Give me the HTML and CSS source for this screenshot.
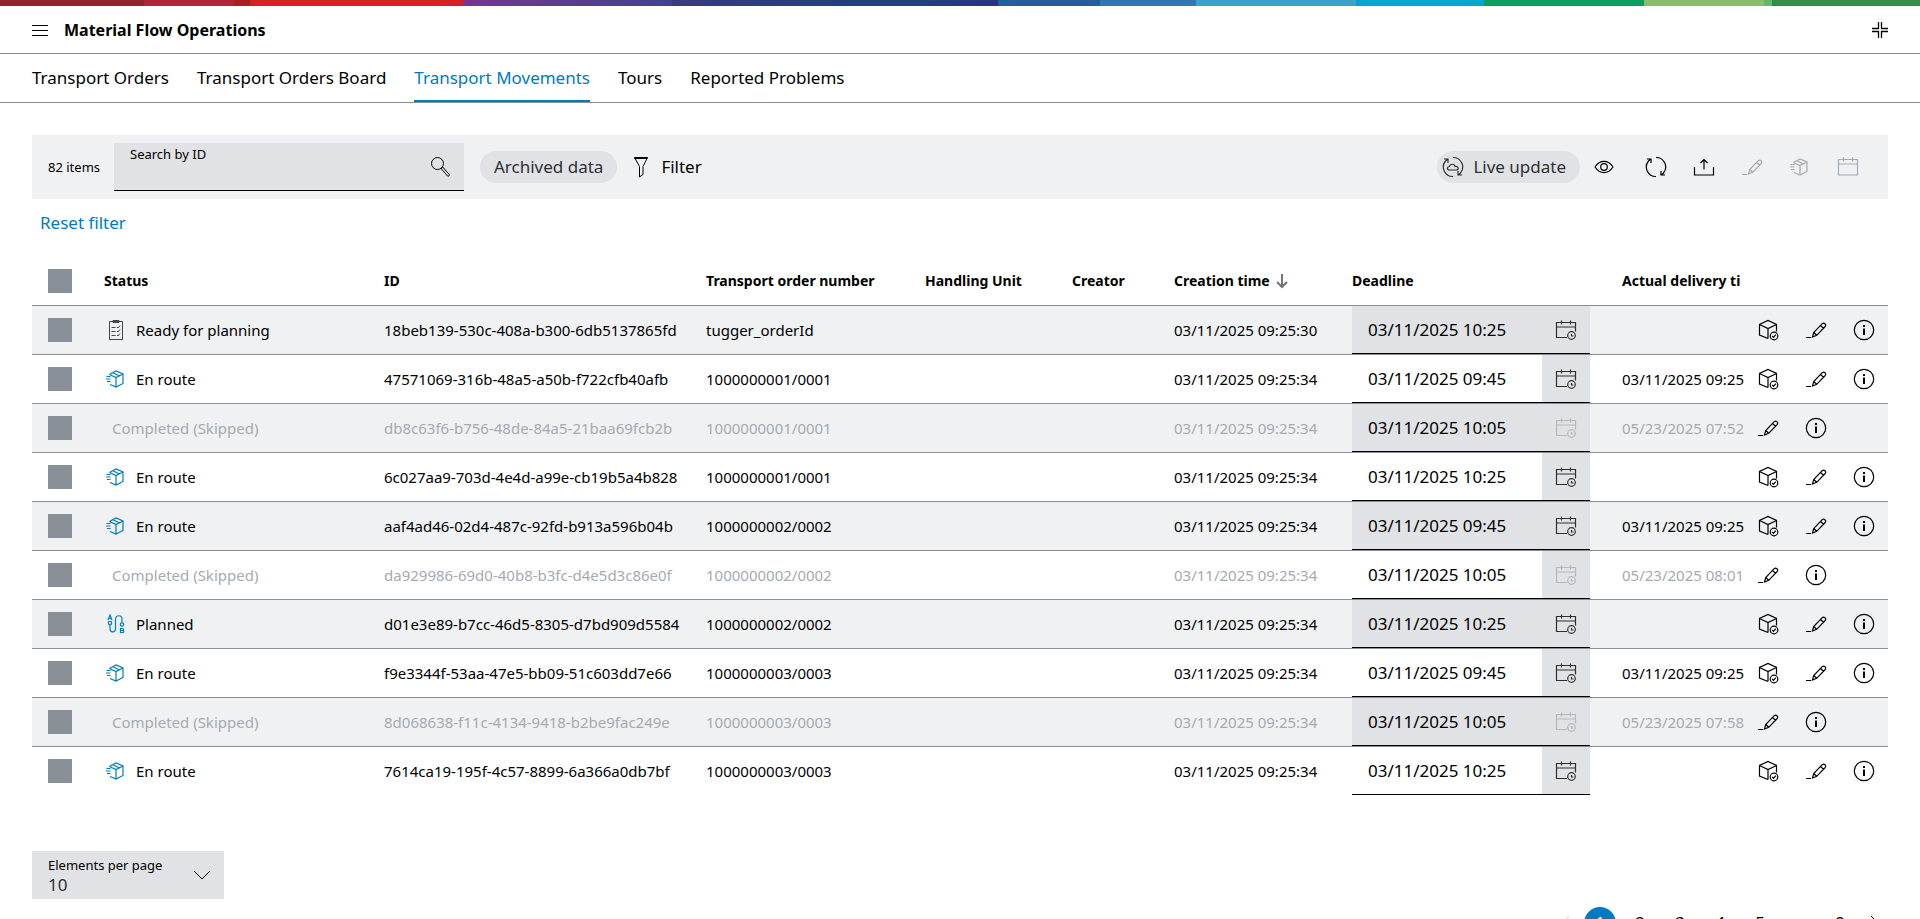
FILE: index.html
```html
<!DOCTYPE html>
<html lang="en">
<head>
<meta charset="utf-8">
<title>Material Flow Operations</title>
<meta name="viewport" content="width=device-width, initial-scale=1">
<link rel="stylesheet" href="styles.css">
</head>
<body>
<svg class="sprite" aria-hidden="true">
  <symbol id="i-search" viewBox="0 0 24 24"><circle cx="9.5" cy="8.5" r="6"/><path d="M13.2 13.6l1.6-1.5 6.3 7.3c.8 1-.7 2.4-1.6 1.5z"/></symbol>
  <symbol id="i-filter" viewBox="0 0 24 24"><path d="M5.500 2.500h13l-4.500 9v8l-3.500 2.500v-10.500zM5.500 3.500h13"/></symbol>
  <symbol id="i-live" viewBox="0 0 24 24"><path d="M12 2.500a9.500 9.500 0 0 1 7.500 15.500l-2 2M12 21.500a9.500 9.500 0 0 1-7.500-15.500l2-2M3 4h4v4M21 20h-4v-4M8.500 15c-3 0-2.500-3.500 0-3.500 .5-3 5-3 5.500 0 4-.5 4 3.500 1.500 3.500z"/></symbol>
  <symbol id="i-eye" viewBox="0 0 24 24"><path d="M3 12c5-7.500 13-7.500 18 0-5 7.500-13 7.500-18 0z"/><circle cx="12" cy="12" r="3.300"/></symbol>
  <symbol id="i-refresh" viewBox="0 0 24 24"><path d="M12 2.500a9.500 9.500 0 0 1 7.500 15.500l-2 2M12 21.500a9.500 9.500 0 0 1-7.500-15.500l2-2M3 4h4v4M21 20h-4v-4"/></symbol>
  <symbol id="i-export" viewBox="0 0 24 24"><path d="M2.500 12v8h19v-8M12 14.500v-10M8.500 8l3.500-3.500 3.500 3.500"/></symbol>
  <symbol id="i-edit" viewBox="0 0 24 24"><path d="M2 19.500h5M8.500 19l1.200-4.500 8.500-8.800c1.800-1.700 4.700.8 3 2.800l-8.500 8.800zM9.700 14.500l3 2.800M16.500 7.500l3 2.800"/></symbol>
  <symbol id="i-transit" viewBox="0 0 24 24"><path d="M5.500 7.500l6.500-3.500 7 3v9.500l-7 3.500-6-2.500M5.500 7.500l6.500 3 7-3.500M12 10.500v9.500M9 5.700l6.500 3.300M2.500 9.500h4M2 12h4.500M3 14.500h3.500"/></symbol>
  <symbol id="i-calendar" viewBox="0 0 24 24"><path d="M2.500 4.500h19v15.500h-19zM2.500 9h19M7.500 2.500v4M16.500 2.500v4"/></symbol>
  <symbol id="i-calclock" viewBox="0 0 24 24"><path d="M13 19.500H2.500V4.500h19v9M2.500 9h19M7.500 2.500v4M16.500 2.500v4M17.500 16v2h2"/><circle cx="17.500" cy="17.500" r="3.800"/></symbol>
  <symbol id="i-boxcheck" viewBox="0 0 24 24"><path d="M12 20.500L3.500 17V6.500l8.500-4 8.500 4v7M3.500 6.500l8.500 4 8.500-4M12 10.500v10"/><circle cx="18" cy="18" r="3.800"/><path d="M16.200 18l1.300 1.300 2.300-2.600"/></symbol>
  <symbol id="i-info" viewBox="0 0 24 24"><circle cx="12" cy="12" r="9.700"/><path class="bold" d="M12 10.500v6.500M12 7v2"/></symbol>
  <symbol id="i-list" viewBox="0 0 24 24"><path d="M5.500 3.500h13v18h-13zM9 2.500h6v2H9zM7.500 9.500h4M7.500 13.500h4M7.500 17.500h4M13 9l1 1 2-2.500M13 13l1 1 2-2.500M13 17l1 1 2-2.500"/></symbol>
  <symbol id="i-route" viewBox="0 0 24 24"><path d="M4 8l2-5 2 5M4.800 6.500h2.400"/><circle cx="6" cy="11" r="1.700"/><path d="M6 13v3.500c0 4.500 5.500 4.500 5.500 0v-9c0-5 6.500-5 6.500 0v3"/><circle cx="18" cy="12.500" r="1.700"/><path d="M16.500 16.500h2a1 1 0 0 1 0 2h-2zm0 2h2.300a1 1 0 0 1 0 2h-2.300z"/></symbol>
  <symbol id="i-sort" viewBox="0 0 16 16"><path d="M8 1v13M3 9l5 5 5-5"/></symbol>
  <symbol id="i-down" viewBox="0 0 16 16"><path d="M0 4l8 8 8-8"/></symbol>
  <symbol id="i-prev" viewBox="0 0 16 16"><path d="M11 1L4 8l7 7"/></symbol>
  <symbol id="i-next" viewBox="0 0 16 16"><path d="M5 1l7 7-7 7"/></symbol>
  <symbol id="i-menu" viewBox="0 0 16 16"><path d="M0 3.500h16M0 8.500h16M0 13.500h16"/></symbol>
  <symbol id="i-collapse" viewBox="0 0 16 16"><path d="M6.500 0v6.500H0M9.500 0v6.500H16M6.500 16V9.500H0M9.500 16V9.500H16"/></symbol>
</svg>

<div class="app">
  <div class="supergraphic"></div>
  <header class="header">
    <button class="plain" type="button" aria-label="Menu"><svg class="icon small"><use href="#i-menu"/></svg></button>
    <h1 class="title">Material Flow Operations</h1>
    <button class="plain" type="button" aria-label="Collapse"><svg class="icon small strong"><use href="#i-collapse"/></svg></button>
  </header>
  <nav class="tabs">
    <a class="tab" href="#orders">Transport Orders</a>
    <a class="tab" href="#board">Transport Orders Board</a>
    <a class="tab active" href="#movements" aria-current="page">Transport Movements</a>
    <a class="tab" href="#tours">Tours</a>
    <a class="tab" href="#problems">Reported Problems</a>
  </nav>

  <main class="content">
    <div class="toolbar">
      <span class="count">82 items</span>
      <div class="search">
        <div class="search-text">
          <label for="search">Search by ID</label>
          <input id="search" type="text">
        </div>
        <button class="tool" type="button" aria-label="Search"><svg class="icon fine"><use href="#i-search"/></svg></button>
      </div>
      <button class="chip" type="button">Archived data</button>
      <button class="filter" type="button"><svg class="icon fine"><use href="#i-filter"/></svg>Filter</button>
      <button class="chip live" type="button"><svg class="icon"><use href="#i-live"/></svg>Live update</button>
      <button class="tool" type="button" aria-label="Show columns"><svg class="icon"><use href="#i-eye"/></svg></button>
      <div class="tools">
        <button class="tool" type="button" aria-label="Refresh"><svg class="icon"><use href="#i-refresh"/></svg></button>
        <button class="tool" type="button" aria-label="Export"><svg class="icon"><use href="#i-export"/></svg></button>
        <button class="tool" type="button" aria-label="Edit" disabled><svg class="icon"><use href="#i-edit"/></svg></button>
        <button class="tool" type="button" aria-label="Set en route" disabled><svg class="icon"><use href="#i-transit"/></svg></button>
        <button class="tool" type="button" aria-label="Change deadline" disabled><svg class="icon"><use href="#i-calendar"/></svg></button>
      </div>
    </div>
    <button class="reset" type="button">Reset filter</button>

    <table class="grid">
      <colgroup>
        <col class="c-check"><col class="c-status"><col class="c-id"><col class="c-order"><col class="c-unit">
        <col class="c-creator"><col class="c-created"><col class="c-deadline"><col class="c-actual"><col class="c-actions">
      </colgroup>
      <thead>
        <tr>
          <th><input class="check" type="checkbox" aria-label="Select all"></th>
          <th>Status</th>
          <th>ID</th>
          <th>Transport order number</th>
          <th>Handling Unit</th>
          <th>Creator</th>
          <th><span class="sorted">Creation time<svg class="icon sort"><use href="#i-sort"/></svg></span></th>
          <th>Deadline</th>
          <th class="actual">Actual delivery ti</th>
          <th></th>
        </tr>
      </thead>
      <tbody id="rows"></tbody>
    </table>

    <div class="page-size">
      <label for="page-size">Elements per page</label>
      <select id="page-size"><option>10</option><option>20</option><option>50</option></select>
      <svg class="icon small chevron"><use href="#i-down"/></svg>
    </div>
    <nav class="pager" aria-label="Pages">
      <button class="arrow" type="button" aria-label="Previous page" disabled><svg class="icon small"><use href="#i-prev"/></svg></button>
      <button class="page current" type="button">1</button>
      <button class="page" type="button">2</button>
      <button class="page" type="button">3</button>
      <button class="page" type="button">4</button>
      <button class="page" type="button">5</button>
      <span class="page">...</span>
      <button class="page" type="button">9</button>
      <button class="arrow" type="button" aria-label="Next page"><svg class="icon small"><use href="#i-next"/></svg></button>
    </nav>
  </main>
</div>
<script src="script.js"></script>
</body>
</html>
```

FILE: styles.css
```css
* { box-sizing: border-box; }

body {
  margin: 0;
  font-family: "Noto Sans", "Open Sans", sans-serif;
  font-size: 17px;
  line-height: 24px;
  color: #000;
  background: #fff;
}

button, input, select { font: inherit; color: inherit; border: 0; border-radius: 0; background: none; padding: 0; margin: 0; }
button { cursor: pointer; }

.sprite { position: absolute; width: 0; height: 0; }
.icon { display: block; flex: none; width: 24px; height: 24px; fill: none; stroke: currentColor; stroke-width: 1.2; }
.icon.small { width: 16px; height: 16px; stroke-width: 1; }
.icon.strong { stroke-width: 1.3; }
.icon.fine { stroke-width: 1; }
.bold { stroke-width: 2; }

.app { display: flex; flex-direction: column; height: 100vh; }

.supergraphic {
  flex: none;
  height: 6px;
  background: linear-gradient(90deg,
    #942331 0 7.5%, #af2639 7.5% 12.2%, #a81f26 12.2% 13%, #d42027 13% 24.1%,
    #74378c 24.1%, #414293 35%, #3a3b80 35%, #223f81 44%, #223f81 48%, #2b3285 52%,
    #225ea0 52% 57.3%, #2d79b7 57.3% 62.3%, #3aa2cc 62.3% 70.6%, #05a5cf 70.6% 77.3%,
    #0d9e5f 77.3% 85.6%, #8abd6f 85.6% 91.9%, #66b372 91.9% 92.3%, #338f48 92.3% 100%);
}

.header { flex: none; display: flex; align-items: center; gap: 16px; height: 48px; padding: 1px 32px 0; border-bottom: 1px solid #8a9097; }
.title { flex: 1; margin: 0; font-size: 16px; line-height: 24px; font-weight: 700; }

.tabs { flex: none; display: flex; gap: 28px; height: 49px; padding: 0 32px; border-bottom: 1px solid #8a9097; }
.tab { display: flex; align-items: center; color: #000; text-decoration: none; border-bottom: 2px solid transparent; padding-top: 2px; white-space: nowrap; }
.tab.active { color: #007bc0; border-bottom-color: #007bc0; }

.content { flex: 1; min-height: 0; padding: 32px 32px 24px; overflow-y: auto; scrollbar-width: none; }

.toolbar { display: flex; align-items: center; height: 64px; padding: 0 16px; background: #eff1f2; }
.count { width: 66px; font-size: 13px; white-space: nowrap; }
.search { display: flex; align-items: center; width: 350px; height: 48px; margin-right: 16px; background: #e0e2e5; border-bottom: 1px solid #000; }
.search-text { flex: 1; display: flex; flex-direction: column; height: 100%; padding-left: 16px; }
.search-text label { font-size: 13px; line-height: 22px; }
.search-text input { width: 100%; height: 24px; outline: 0; }
.tool { display: flex; align-items: center; justify-content: center; width: 48px; height: 48px; }
.tool:disabled { color: #a4abb3; }
.chip { height: 32px; padding: 0 14px; border-radius: 16px; background: #e0e2e5; color: #2e3033; white-space: nowrap; }
.filter { display: flex; align-items: center; gap: 8px; margin-left: 12px; }
.live { display: flex; align-items: center; gap: 8px; margin-left: auto; padding: 0 14px 0 4px; }
.tools { display: flex; margin-left: 4px; }

.reset { display: block; margin: 12px 0 22px 8px; color: #007bc0; }

.grid { width: 100%; table-layout: fixed; border-spacing: 0; font-size: 15px; }
.c-check { width: 56px; }
.c-status { width: 280px; }
.c-id { width: 322px; }
.c-order { width: 219px; }
.c-unit { width: 147px; }
.c-creator { width: 102px; }
.c-created { width: 178px; }
.c-deadline { width: 270px; }
.c-actual { width: 138px; }
.c-actions { width: 144px; }
.grid th, .grid td { height: 49px; padding: 0 16px; border-bottom: 1px solid #8a9097; text-align: left; white-space: nowrap; }
.grid th { font-size: 14px; font-weight: 700; }
.grid tbody tr:nth-child(odd) { background: #eff1f2; }
.grid tbody tr:last-child td { border-bottom-color: transparent; }
.grid .actual { padding-right: 0; }
.grid .actions { padding: 0; }
.skipped { color: #a4abb3; }

.check { display: block; appearance: none; width: 24px; height: 24px; background: #8a9097; }
.sorted { display: flex; align-items: center; gap: 4px; }
.icon.sort { width: 16px; height: 16px; color: #71767c; stroke-width: 2; }
.status { display: flex; align-items: center; gap: 8px; }
.status .icon { color: #007bc0; }
.status .icon.neutral { color: #43464a; stroke-width: 1; }
.skipped .status { padding-left: 8px; }

.deadline { display: flex; height: 48px; border-bottom: 1px solid #000; }
.deadline input { flex: 1; min-width: 0; padding-left: 16px; font-size: 17px; color: #000; }
.deadline .tool { height: 100%; background: #e0e2e5; color: #2e3033; }
.deadline .tool:disabled { color: #b2b9c0; }
tr:nth-child(odd) .deadline { background: #e0e2e5; }
.row-tools { display: flex; color: #000; }

.page-size { position: relative; display: flex; flex-direction: column; width: 192px; height: 48px; margin-top: 55px; background: #e0e2e5; }
.page-size label { padding: 4px 16px 0; font-size: 13px; line-height: 20px; }
.page-size select { appearance: none; width: 100%; height: 20px; padding: 0 16px; line-height: 20px; color: #2e3033; }
.chevron { position: absolute; right: 14px; top: 16px; pointer-events: none; }

.pager { display: flex; align-items: center; justify-content: flex-end; margin-top: 8px; }
.page { width: 32px; height: 32px; margin: 0 4px; border-radius: 50%; text-align: center; line-height: 32px; }
.current { background: #007bc0; color: #fff; }
.arrow { display: flex; align-items: center; justify-content: center; width: 28px; height: 32px; }
.arrow:disabled { color: #c1c7cc; }
```

FILE: script.js
```js
const movements = [
  ["Ready for planning", "18beb139-530c-408a-b300-6db5137865fd", "tugger_orderId", "03/11/2025 09:25:30", "03/11/2025 10:25", ""],
  ["En route", "47571069-316b-48a5-a50b-f722cfb40afb", "1000000001/0001", "03/11/2025 09:25:34", "03/11/2025 09:45", "03/11/2025 09:25"],
  ["Completed (Skipped)", "db8c63f6-b756-48de-84a5-21baa69fcb2b", "1000000001/0001", "03/11/2025 09:25:34", "03/11/2025 10:05", "05/23/2025 07:52"],
  ["En route", "6c027aa9-703d-4e4d-a99e-cb19b5a4b828", "1000000001/0001", "03/11/2025 09:25:34", "03/11/2025 10:25", ""],
  ["En route", "aaf4ad46-02d4-487c-92fd-b913a596b04b", "1000000002/0002", "03/11/2025 09:25:34", "03/11/2025 09:45", "03/11/2025 09:25"],
  ["Completed (Skipped)", "da929986-69d0-40b8-b3fc-d4e5d3c86e0f", "1000000002/0002", "03/11/2025 09:25:34", "03/11/2025 10:05", "05/23/2025 08:01"],
  ["Planned", "d01e3e89-b7cc-46d5-8305-d7bd909d5584", "1000000002/0002", "03/11/2025 09:25:34", "03/11/2025 10:25", ""],
  ["En route", "f9e3344f-53aa-47e5-bb09-51c603dd7e66", "1000000003/0003", "03/11/2025 09:25:34", "03/11/2025 09:45", "03/11/2025 09:25"],
  ["Completed (Skipped)", "8d068638-f11c-4134-9418-b2be9fac249e", "1000000003/0003", "03/11/2025 09:25:34", "03/11/2025 10:05", "05/23/2025 07:58"],
  ["En route", "7614ca19-195f-4c57-8899-6a366a0db7bf", "1000000003/0003", "03/11/2025 09:25:34", "03/11/2025 10:25", ""]
];

const statusIcons = { "Ready for planning": "list", "En route": "transit", "Planned": "route" };

const icon = (name, cls = "") => `<svg class="icon ${cls}"><use href="#i-${name}"/></svg>`;
const tool = (name, label, attrs = "") =>
  `<button class="tool" type="button" aria-label="${label}" ${attrs}>${icon(name)}</button>`;

document.getElementById("rows").innerHTML = movements.map(([status, id, order, created, deadline, actual]) => {
  const skipped = !(status in statusIcons);
  const mark = skipped ? "" : icon(statusIcons[status], status === "Ready for planning" ? "neutral" : "");
  return `<tr class="${skipped ? "skipped" : ""}">
    <td><input class="check" type="checkbox" aria-label="Select ${id}"></td>
    <td><div class="status">${mark}<span>${status}</span></div></td>
    <td>${id}</td>
    <td>${order}</td>
    <td></td>
    <td></td>
    <td>${created}</td>
    <td><div class="deadline"><input type="text" aria-label="Deadline" value="${deadline}">${tool("calclock", "Pick deadline", skipped ? "disabled" : "")}</div></td>
    <td class="actual">${actual}</td>
    <td class="actions"><div class="row-tools">${skipped ? "" : tool("boxcheck", "Deliver")}${tool("edit", "Edit")}${tool("info", "Details")}</div></td>
  </tr>`;
}).join("");
```
